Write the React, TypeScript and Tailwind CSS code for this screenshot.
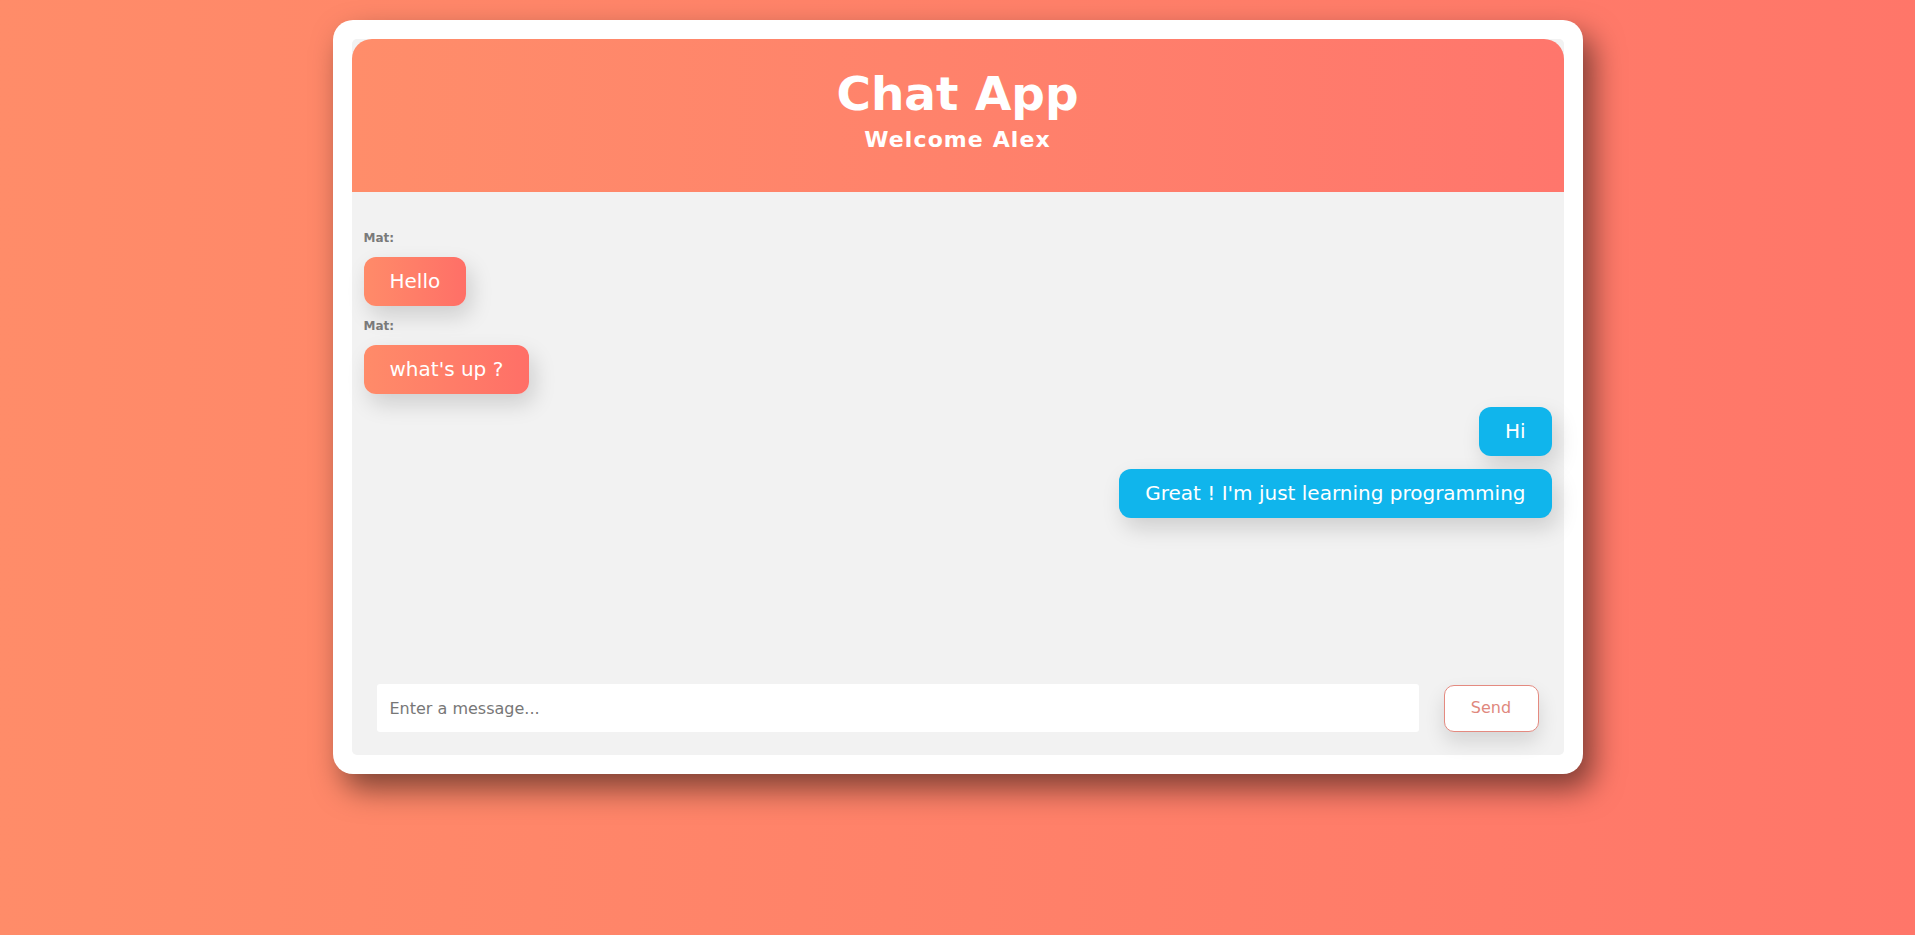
import React from "react";

type Message = {
  id: number;
  author: string;
  text: string;
  mine: boolean;
};

const messages: Message[] = [
  { id: 1, author: "Mat", text: "Hello", mine: false },
  { id: 2, author: "Mat", text: "what's up ?", mine: false },
  { id: 3, author: "Alex", text: "Hi", mine: true },
  { id: 4, author: "Alex", text: "Great ! I'm just learning programming", mine: true },
];

const Bubble = ({ message }: { message: Message }) => {
  if (message.mine) {
    return (
      <div className="flex flex-col items-end">
        <div className="bg-[#10b5ec] text-white text-[20px] leading-[25px] px-[26px] py-3 rounded-xl shadow-[5px_10px_22px_rgba(0,0,0,0.15)]">
          {message.text}
        </div>
      </div>
    );
  }
  return (
    <div className="flex flex-col items-start">
      <span className="text-[12px] leading-[14px] font-bold text-[#7a7a7a]">
        {message.author}:
      </span>
      <div className="mt-3 bg-gradient-to-r from-[#ff8b69] to-[#ff6f67] text-white text-[20px] leading-[25px] px-[26px] py-3 rounded-xl shadow-[5px_10px_22px_rgba(0,0,0,0.15)]">
        {message.text}
      </div>
    </div>
  );
};

const App = () => {
  return (
    <div className="min-h-screen w-full bg-gradient-to-r from-[#ff8c69] to-[#ff7669] pt-5 font-['DejaVu_Sans',sans-serif]">
      <div className="mx-auto w-[1250px] h-[754px] bg-white rounded-[20px] p-[19px] shadow-[10px_15px_30px_rgba(0,0,0,0.5)]">
        <div className="flex flex-col h-full bg-[#f2f2f2] rounded-[5px]">
          {/* header */}
          <div className="h-[153px] shrink-0 rounded-t-[20px] bg-gradient-to-r from-[#ff8d6a] to-[#ff766c] pt-[31px] flex flex-col items-center text-white">
            <h1 className="text-[47px] leading-[47px] font-bold">Chat App</h1>
            <h2 className="mt-[12px] text-[22px] leading-[22px] font-bold tracking-[1.1px]">
              Welcome Alex
            </h2>
          </div>

          {/* messages */}
          <div className="flex-1 flex flex-col gap-[13px] px-3 pt-[39px]">
            {messages.map((message) => (
              <Bubble message={message} key={message.id} />
            ))}
          </div>

          {/* input row */}
          <div className="flex items-center gap-[25px] px-[25px] pb-[23px]">
            <input
              type="text"
              placeholder="Enter a message..."
              className="flex-1 h-[48px] bg-white rounded-[3px] px-[13px] text-[16px] text-[#333] placeholder:text-[#777] outline-none"
            />
            <button className="w-[95px] h-[47px] bg-white border border-[#e48a80] rounded-[10px] text-[16px] text-[#e0887d] shadow-[0_10px_20px_rgba(0,0,0,0.12)]">
              Send
            </button>
          </div>
        </div>
      </div>
    </div>
  );
};

export default App;
